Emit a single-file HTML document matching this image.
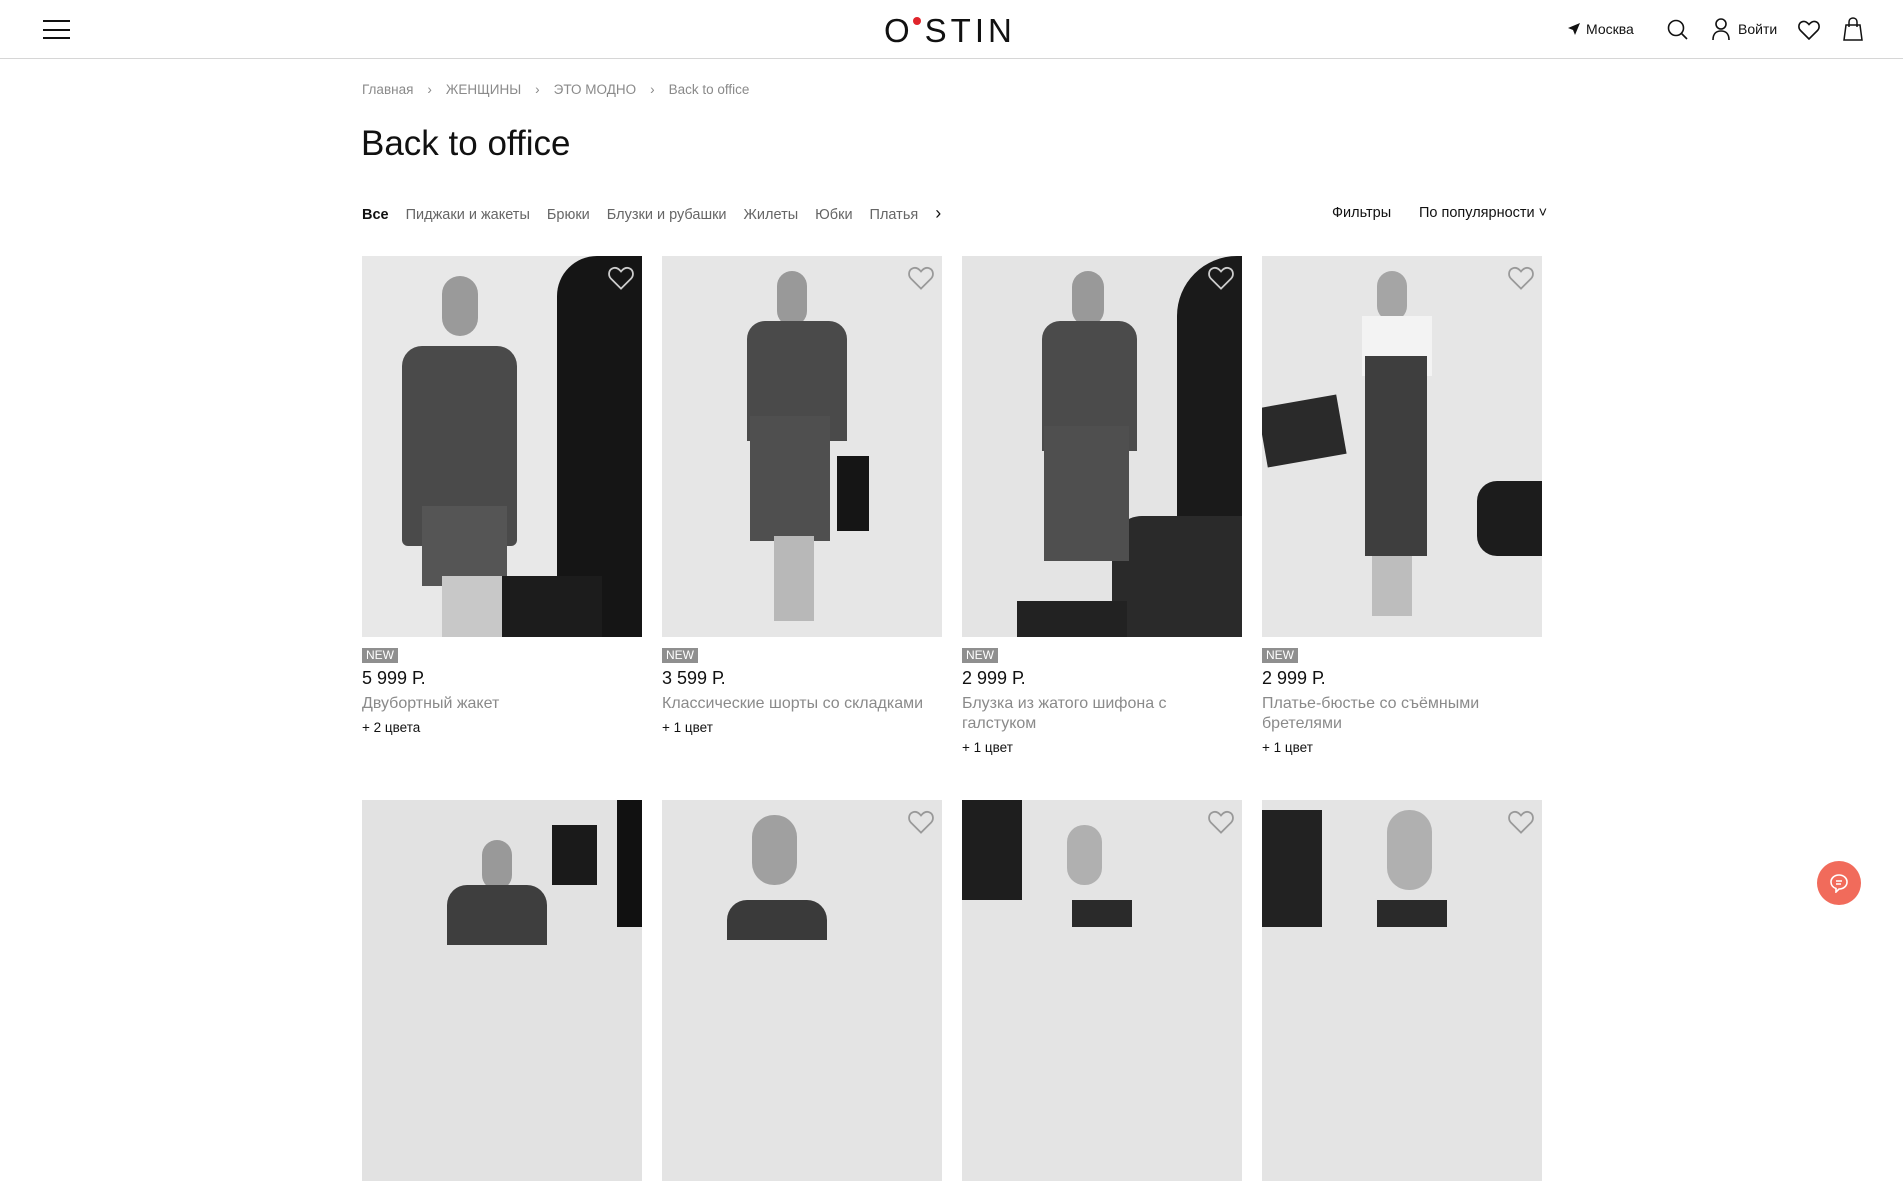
<!DOCTYPE html>
<html><head><meta charset="utf-8"><style>
*{margin:0;padding:0;box-sizing:border-box}
body{width:1903px;height:927px;overflow:hidden;background:#fff;font-family:"Liberation Sans","Noto Sans CJK SC",sans-serif;color:#111;position:relative}
.abs{position:absolute}
.hdr{position:absolute;left:0;top:0;width:1903px;height:59px;border-bottom:1px solid #d6d6d6}
.logo{position:absolute;left:884px;top:12px;font-size:33px;letter-spacing:4px;color:#111;font-weight:400;white-space:nowrap}
.logo .dot{display:inline-block;width:8px;height:8px;border-radius:50%;background:#e0242b;vertical-align:top;margin:5px 4px 0 -1px}
.bc{position:absolute;top:82px;left:362px;font-size:13.5px;color:#8a8a8a;white-space:nowrap}
.bc span{margin-right:14px}
.title{position:absolute;left:361px;top:124px;font-size:35px;font-weight:300;color:#111}
.tabs{position:absolute;left:362px;top:203px;font-size:14.5px;color:#666;white-space:nowrap}
.tabs span{margin-right:17px}
.card{position:absolute;width:280px}
.img{position:absolute;left:0;top:0;width:280px;height:381px;background:#e4e4e4;overflow:hidden}
.new{position:absolute;top:392px;left:0;background:#8f8f8f;color:#fff;font-size:12px;padding:1px 4px;line-height:13px}
.price{position:absolute;top:412px;left:0;font-size:18px;color:#111}
.name{position:absolute;top:438px;left:0;font-size:16px;color:#8a8a8a;line-height:20px;width:280px}
.col{position:absolute;left:0;font-size:13.5px;color:#111}
.heart{position:absolute;right:8px;top:10px}
</style></head><body>
<div class="hdr">
  <div class="abs" style="left:43px;top:20px;width:27px;height:2px;background:#111"></div>
  <div class="abs" style="left:43px;top:29px;width:27px;height:2px;background:#111"></div>
  <div class="abs" style="left:43px;top:37px;width:27px;height:2px;background:#111"></div>
  <div class="logo">O<span class="dot"></span>STIN</div>
  <svg class="abs" style="left:1567px;top:22px" width="14" height="14" viewBox="0 0 14 14"><path d="M13 1 L1 6 L6 8 L8 13 Z" fill="#111"/></svg>
  <div class="abs" style="left:1586px;top:21px;font-size:14px">Москва</div>
  <svg class="abs" style="left:1667px;top:19px" width="22" height="22" viewBox="0 0 22 22" fill="none" stroke="#111" stroke-width="1.6"><circle cx="9" cy="9" r="7.5"/><path d="M14.5 14.5 L20 20"/></svg>
  <svg class="abs" style="left:1712px;top:18px" width="18" height="23" viewBox="0 0 18 23" fill="none" stroke="#111" stroke-width="1.6"><circle cx="9" cy="6" r="5"/><path d="M1 22 C1 15 5 13 9 13 C13 13 17 15 17 22"/></svg>
  <div class="abs" style="left:1738px;top:21px;font-size:14px">Войти</div>
  <svg class="abs" style="left:1798px;top:20px" width="22" height="20" viewBox="0 0 22 20" fill="none" stroke="#111" stroke-width="1.6"><path d="M11 19 L2.5 10.5 C0 8 0.5 3.5 3.5 2 C6.5 0.5 9 2 11 4.5 C13 2 15.5 0.5 18.5 2 C21.5 3.5 22 8 19.5 10.5 Z"/></svg>
  <svg class="abs" style="left:1843px;top:17px" width="20" height="24" viewBox="0 0 20 24" fill="none" stroke="#111" stroke-width="1.5"><path d="M3 8 L17 8 L19 23 L1 23 Z"/><path d="M6 10 V5 C6 2.5 7.8 1 10 1 C12.2 1 14 2.5 14 5 V10"/></svg>
</div>
<div class="bc"><span>Главная</span><span>›</span><span>ЖЕНЩИНЫ</span><span>›</span><span>ЭТО МОДНО</span><span>›</span><span>Back to office</span></div>
<div class="title">Back to office</div>
<div class="tabs"><span style="color:#111;font-weight:bold">Все</span><span>Пиджаки и жакеты</span><span>Брюки</span><span>Блузки и рубашки</span><span>Жилеты</span><span>Юбки</span><span>Платья</span><span style="color:#111;font-size:18px">›</span></div>
<div class="abs" style="left:1332px;top:205px;font-size:14.5px">Фильтры</div>
<div class="abs" style="left:1419px;top:205px;font-size:14.5px">По популярности ˅</div>

<div class="card" style="left:362px;top:256px">
  <div class="img" style="background:#e8e8e8">
    <div class="abs" style="left:195px;top:0;width:85px;height:381px;background:#151515;border-radius:40px 0 0 0"></div>
    <div class="abs" style="left:80px;top:20px;width:36px;height:60px;border-radius:18px;background:#9a9a9a"></div>
    <div class="abs" style="left:40px;top:90px;width:115px;height:200px;background:#4a4a4a;border-radius:20px 20px 6px 6px"></div>
    <div class="abs" style="left:60px;top:250px;width:85px;height:80px;background:#555"></div>
    <div class="abs" style="left:80px;top:320px;width:60px;height:61px;background:#c8c8c8"></div>
    <div class="abs" style="left:140px;top:320px;width:100px;height:61px;background:#1c1c1c"></div>
    <svg class="heart" width="26" height="24" viewBox="0 0 22 20" fill="none" stroke="#ccc" stroke-width="1.5"><path d="M11 19 L2.5 10.5 C0 8 0.5 3.5 3.5 2 C6.5 0.5 9 2 11 4.5 C13 2 15.5 0.5 18.5 2 C21.5 3.5 22 8 19.5 10.5 Z"/></svg>
  </div>
  <div class="new">NEW</div><div class="price">5 999 Р.</div><div class="name">Двубортный жакет</div><div class="col" style="top:464px">+ 2 цвета</div>
</div>
<div class="card" style="left:662px;top:256px">
  <div class="img" style="background:#e6e6e6">
    <div class="abs" style="left:115px;top:15px;width:30px;height:55px;border-radius:15px;background:#999"></div>
    <div class="abs" style="left:85px;top:65px;width:100px;height:120px;background:#4a4a4a;border-radius:18px 18px 0 0"></div>
    <div class="abs" style="left:88px;top:160px;width:80px;height:125px;background:#4f4f4f"></div>
    <div class="abs" style="left:175px;top:200px;width:32px;height:75px;background:#151515"></div>
    <div class="abs" style="left:112px;top:280px;width:40px;height:85px;background:#b8b8b8"></div>
    <svg class="heart" width="26" height="24" viewBox="0 0 22 20" fill="none" stroke="#999" stroke-width="1.5"><path d="M11 19 L2.5 10.5 C0 8 0.5 3.5 3.5 2 C6.5 0.5 9 2 11 4.5 C13 2 15.5 0.5 18.5 2 C21.5 3.5 22 8 19.5 10.5 Z"/></svg>
  </div>
  <div class="new">NEW</div><div class="price">3 599 Р.</div><div class="name">Классические шорты со складками</div><div class="col" style="top:464px">+ 1 цвет</div>
</div>
<div class="card" style="left:962px;top:256px">
  <div class="img" style="background:#e4e4e4">
    <div class="abs" style="left:215px;top:0;width:65px;height:280px;background:#1a1a1a;border-radius:60px 0 0 0"></div>
    <div class="abs" style="left:150px;top:260px;width:130px;height:121px;background:#2a2a2a;border-radius:30px 0 0 0"></div>
    <div class="abs" style="left:110px;top:15px;width:32px;height:55px;border-radius:16px;background:#999"></div>
    <div class="abs" style="left:80px;top:65px;width:95px;height:130px;background:#4b4b4b;border-radius:18px 18px 0 0"></div>
    <div class="abs" style="left:82px;top:170px;width:85px;height:135px;background:#4f4f4f"></div>
    <div class="abs" style="left:55px;top:345px;width:110px;height:36px;background:#222"></div>
    <svg class="heart" width="26" height="24" viewBox="0 0 22 20" fill="none" stroke="#ccc" stroke-width="1.5"><path d="M11 19 L2.5 10.5 C0 8 0.5 3.5 3.5 2 C6.5 0.5 9 2 11 4.5 C13 2 15.5 0.5 18.5 2 C21.5 3.5 22 8 19.5 10.5 Z"/></svg>
  </div>
  <div class="new">NEW</div><div class="price">2 999 Р.</div><div class="name">Блузка из жатого шифона с галстуком</div><div class="col" style="top:484px">+ 1 цвет</div>
</div>
<div class="card" style="left:1262px;top:256px">
  <div class="img" style="background:#e6e6e6">
    <div class="abs" style="left:115px;top:15px;width:30px;height:50px;border-radius:15px;background:#a5a5a5"></div>
    <div class="abs" style="left:100px;top:60px;width:70px;height:60px;background:#f3f3f3"></div>
    <div class="abs" style="left:103px;top:100px;width:62px;height:200px;background:#3e3e3e"></div>
    <div class="abs" style="left:110px;top:300px;width:40px;height:60px;background:#bdbdbd"></div>
    <div class="abs" style="left:0;top:145px;width:80px;height:60px;background:#2a2a2a;transform:rotate(-10deg)"></div>
    <div class="abs" style="left:215px;top:225px;width:65px;height:75px;background:#1c1c1c;border-radius:20px 0 0 20px"></div>
    <svg class="heart" width="26" height="24" viewBox="0 0 22 20" fill="none" stroke="#999" stroke-width="1.5"><path d="M11 19 L2.5 10.5 C0 8 0.5 3.5 3.5 2 C6.5 0.5 9 2 11 4.5 C13 2 15.5 0.5 18.5 2 C21.5 3.5 22 8 19.5 10.5 Z"/></svg>
  </div>
  <div class="new">NEW</div><div class="price">2 999 Р.</div><div class="name">Платье-бюстье со съёмными бретелями</div><div class="col" style="top:484px">+ 1 цвет</div>
</div>

<div class="card" style="left:362px;top:800px"><div class="img" style="background:#e2e2e2">
  <div class="abs" style="left:120px;top:40px;width:30px;height:50px;border-radius:15px;background:#999"></div>
  <div class="abs" style="left:85px;top:85px;width:100px;height:60px;background:#3e3e3e;border-radius:20px 20px 0 0"></div>
  <div class="abs" style="left:190px;top:25px;width:45px;height:60px;background:#1a1a1a"></div>
  <div class="abs" style="left:255px;top:0;width:25px;height:127px;background:#111"></div>
</div></div>
<div class="card" style="left:662px;top:800px"><div class="img" style="background:#e4e4e4">
  <div class="abs" style="left:90px;top:15px;width:45px;height:70px;border-radius:22px;background:#a0a0a0"></div>
  <div class="abs" style="left:65px;top:100px;width:100px;height:40px;background:#3a3a3a;border-radius:20px 20px 0 0"></div>
  <svg class="heart" width="26" height="24" viewBox="0 0 22 20" fill="none" stroke="#999" stroke-width="1.5"><path d="M11 19 L2.5 10.5 C0 8 0.5 3.5 3.5 2 C6.5 0.5 9 2 11 4.5 C13 2 15.5 0.5 18.5 2 C21.5 3.5 22 8 19.5 10.5 Z"/></svg>
</div></div>
<div class="card" style="left:962px;top:800px"><div class="img" style="background:#e4e4e4">
  <div class="abs" style="left:0;top:0;width:60px;height:100px;background:#1e1e1e"></div>
  <div class="abs" style="left:105px;top:25px;width:35px;height:60px;border-radius:17px;background:#b0b0b0"></div>
  <div class="abs" style="left:110px;top:100px;width:60px;height:27px;background:#2a2a2a"></div>
  <svg class="heart" width="26" height="24" viewBox="0 0 22 20" fill="none" stroke="#999" stroke-width="1.5"><path d="M11 19 L2.5 10.5 C0 8 0.5 3.5 3.5 2 C6.5 0.5 9 2 11 4.5 C13 2 15.5 0.5 18.5 2 C21.5 3.5 22 8 19.5 10.5 Z"/></svg>
</div></div>
<div class="card" style="left:1262px;top:800px"><div class="img" style="background:#e4e4e4">
  <div class="abs" style="left:0;top:10px;width:60px;height:117px;background:#222"></div>
  <div class="abs" style="left:125px;top:10px;width:45px;height:80px;border-radius:22px;background:#b0b0b0"></div>
  <div class="abs" style="left:115px;top:100px;width:70px;height:27px;background:#2a2a2a"></div>
  <svg class="heart" width="26" height="24" viewBox="0 0 22 20" fill="none" stroke="#999" stroke-width="1.5"><path d="M11 19 L2.5 10.5 C0 8 0.5 3.5 3.5 2 C6.5 0.5 9 2 11 4.5 C13 2 15.5 0.5 18.5 2 C21.5 3.5 22 8 19.5 10.5 Z"/></svg>
</div></div>

<div class="abs" style="left:1817px;top:861px;width:44px;height:44px;border-radius:50%;background:#f16b5b"></div>
<svg class="abs" style="left:1829px;top:873px" width="20" height="20" viewBox="0 0 20 20" fill="none" stroke="#fff" stroke-width="1.6"><path d="M10 2 C14.5 2 18 5 18 9 C18 13 14.5 16 10 16 L7 19 L7 15.5 C4 14.5 2 12 2 9 C2 5 5.5 2 10 2 Z"/><path d="M7 8 H13 M7 11 H12"/></svg>
</body></html>
